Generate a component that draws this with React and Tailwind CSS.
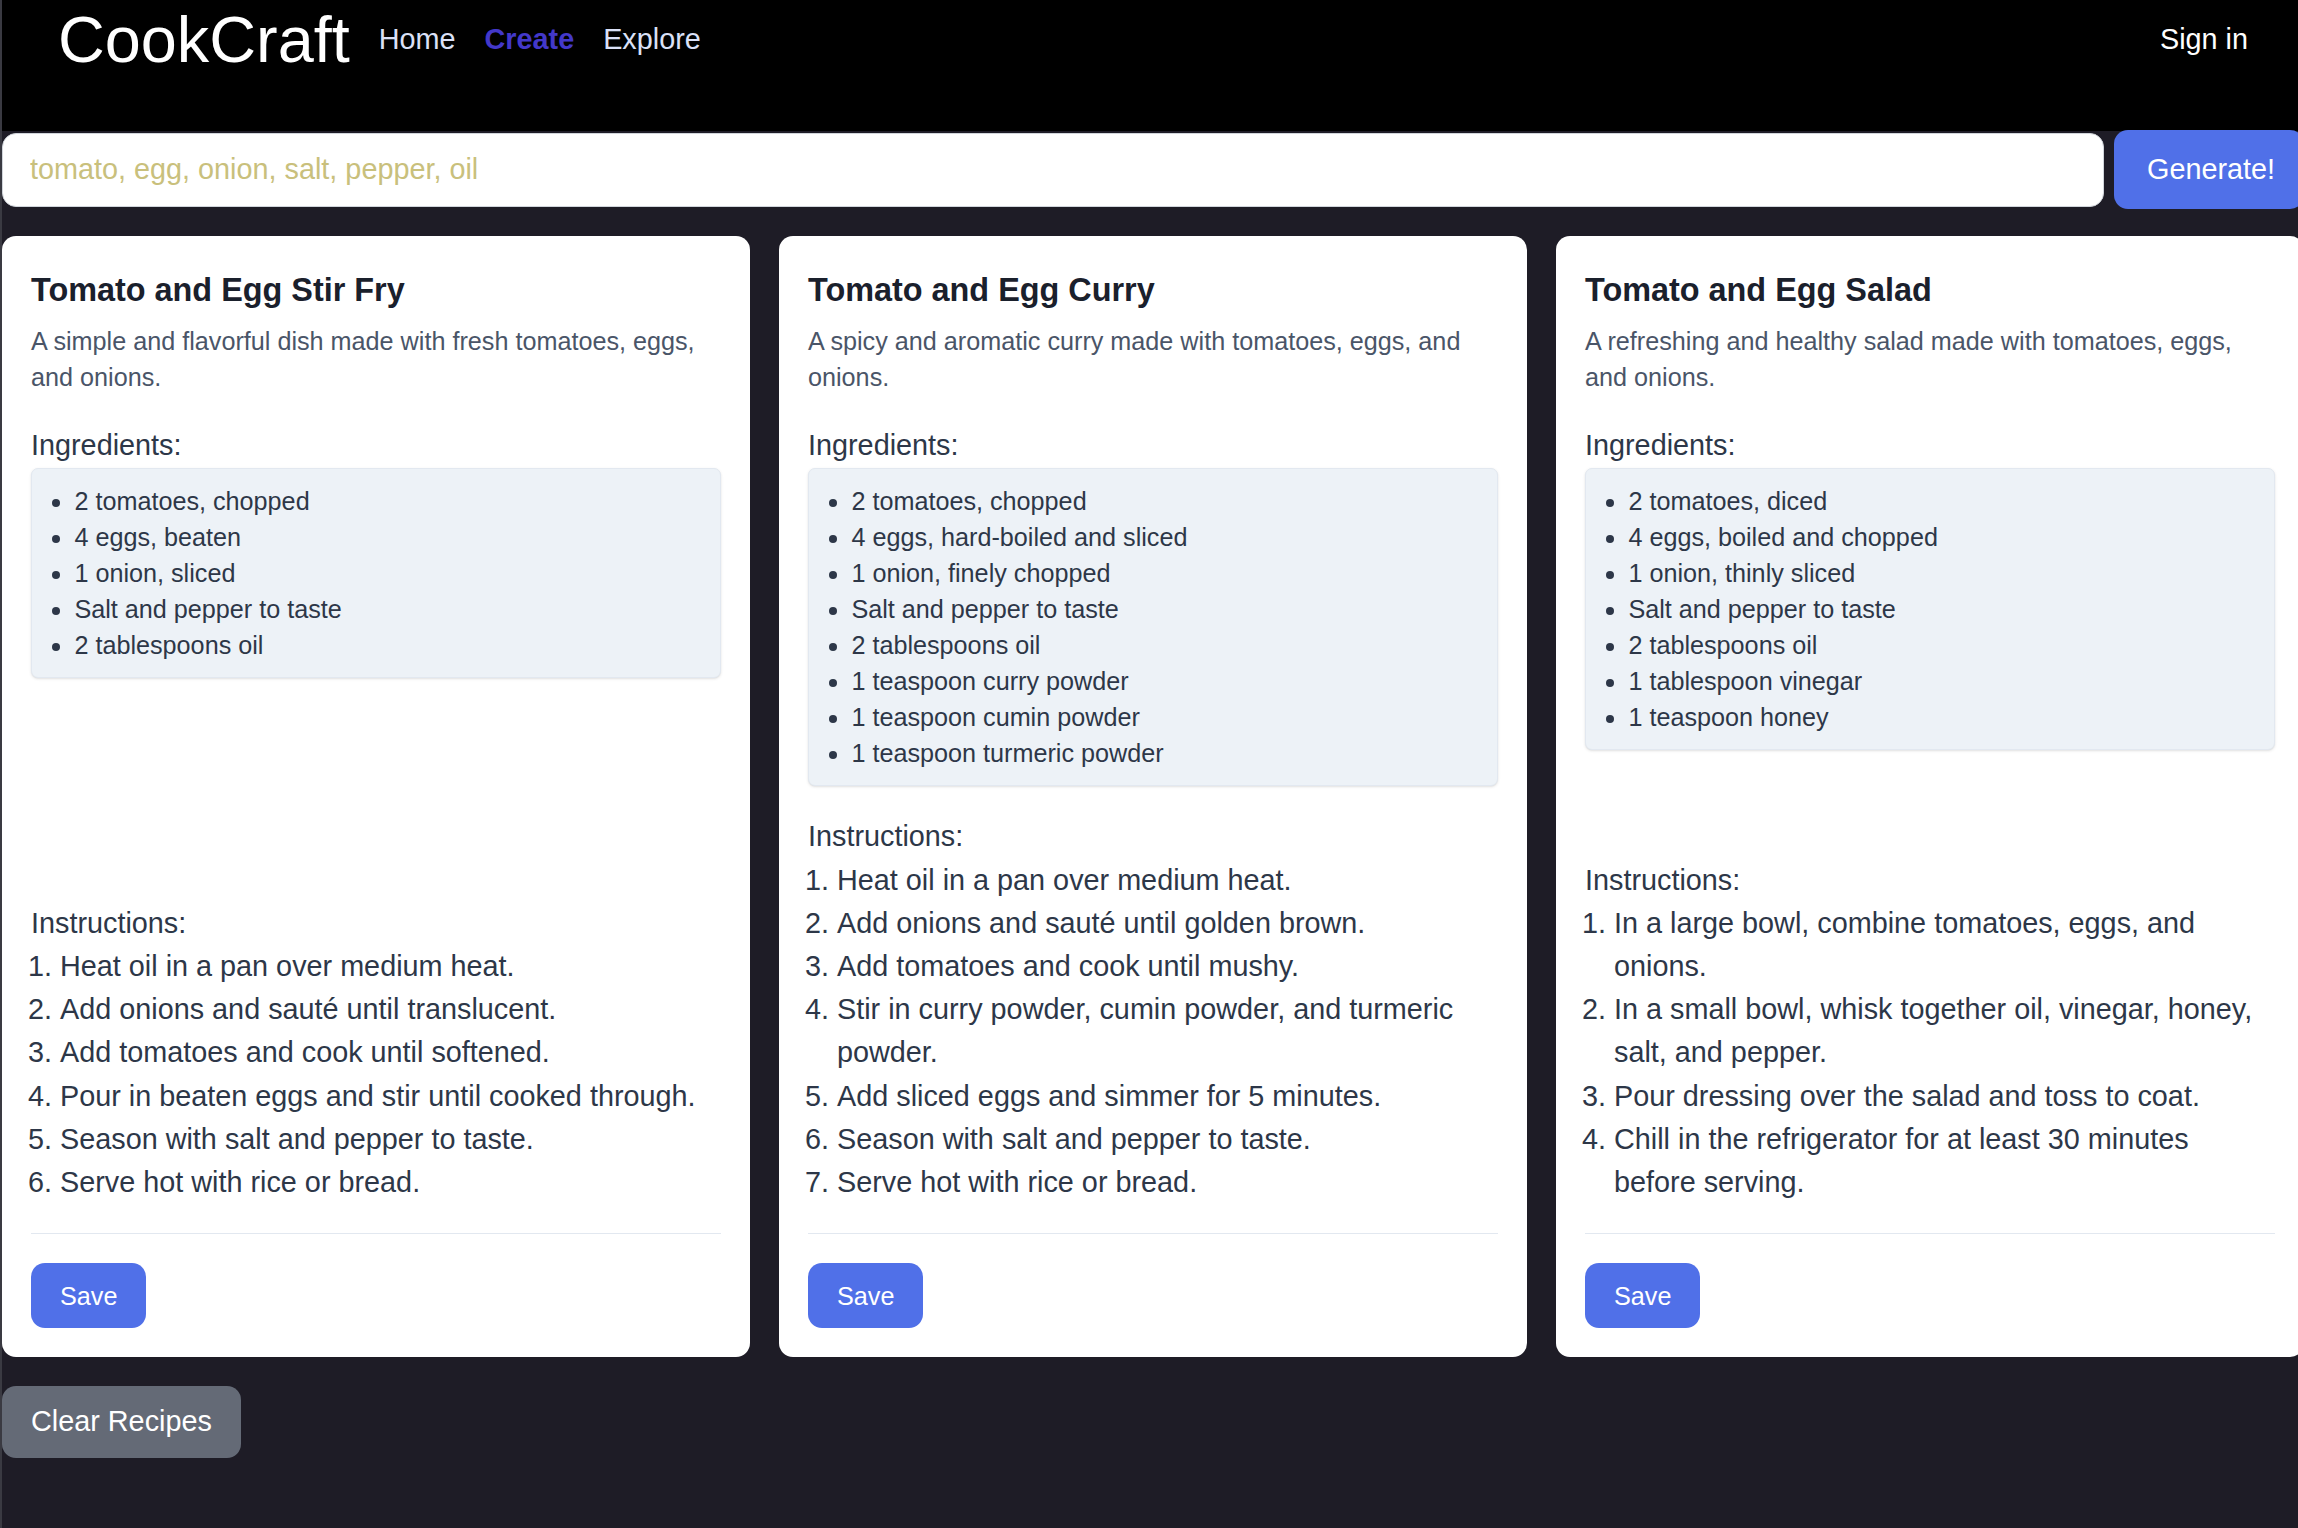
import React from 'react';

const recipes = [
  {
    title: 'Tomato and Egg Stir Fry',
    description: 'A simple and flavorful dish made with fresh tomatoes, eggs, and onions.',
    ingredients: ['2 tomatoes, chopped', '4 eggs, beaten', '1 onion, sliced', 'Salt and pepper to taste', '2 tablespoons oil'],
    instructions: [
      'Heat oil in a pan over medium heat.',
      'Add onions and sauté until translucent.',
      'Add tomatoes and cook until softened.',
      'Pour in beaten eggs and stir until cooked through.',
      'Season with salt and pepper to taste.',
      'Serve hot with rice or bread.',
    ],
  },
  {
    title: 'Tomato and Egg Curry',
    description: 'A spicy and aromatic curry made with tomatoes, eggs, and onions.',
    ingredients: [
      '2 tomatoes, chopped',
      '4 eggs, hard-boiled and sliced',
      '1 onion, finely chopped',
      'Salt and pepper to taste',
      '2 tablespoons oil',
      '1 teaspoon curry powder',
      '1 teaspoon cumin powder',
      '1 teaspoon turmeric powder',
    ],
    instructions: [
      'Heat oil in a pan over medium heat.',
      'Add onions and sauté until golden brown.',
      'Add tomatoes and cook until mushy.',
      'Stir in curry powder, cumin powder, and turmeric powder.',
      'Add sliced eggs and simmer for 5 minutes.',
      'Season with salt and pepper to taste.',
      'Serve hot with rice or bread.',
    ],
  },
  {
    title: 'Tomato and Egg Salad',
    description: 'A refreshing and healthy salad made with tomatoes, eggs, and onions.',
    ingredients: [
      '2 tomatoes, diced',
      '4 eggs, boiled and chopped',
      '1 onion, thinly sliced',
      'Salt and pepper to taste',
      '2 tablespoons oil',
      '1 tablespoon vinegar',
      '1 teaspoon honey',
    ],
    instructions: [
      'In a large bowl, combine tomatoes, eggs, and onions.',
      'In a small bowl, whisk together oil, vinegar, honey, salt, and pepper.',
      'Pour dressing over the salad and toss to coat.',
      'Chill in the refrigerator for at least 30 minutes before serving.',
    ],
  },
];

function RecipeCard({ recipe }) {
  return (
    <div className="bg-white rounded-[14px] p-[29px] flex flex-col">
      <h2 className="text-[32.4px] leading-[50.4px] font-bold text-[#1a202c]">{recipe.title}</h2>
      <p className="mt-[8px] text-[25.2px] leading-[36px] text-[#4a5568]">{recipe.description}</p>

      <h3 className="mt-[29px] text-[28.8px] leading-[43.2px] text-[#2d3748]">Ingredients:</h3>
      <div className="bg-[#edf2f7] border border-[#e2e8f0] rounded-[7px] p-[14.4px] shadow-sm">
        <ul className="list-disc pl-[28px] text-[25.2px] leading-[36px] text-[#2d3748]">
          {recipe.ingredients.map((item, i) => (
            <li key={i}>{item}</li>
          ))}
        </ul>
      </div>

      {/* instructions sit at the bottom so the cards line up */}
      <div className="mt-auto pt-[29px]">
        <h3 className="text-[28.8px] leading-[43.2px] text-[#2d3748]">Instructions:</h3>
        <ol className="list-decimal pl-[29px] text-[28.8px] leading-[43.2px] text-[#2d3748]">
          {recipe.instructions.map((step, i) => (
            <li key={i}>{step}</li>
          ))}
        </ol>
      </div>

      <div className="mt-[29px] pt-[29px] border-t border-[#e2e8f0]">
        <button className="bg-[#5070e8] text-white rounded-[14px] px-[29px] py-[14.4px] text-[25.2px] leading-[36px]">
          Save
        </button>
      </div>
    </div>
  );
}

export default function App() {
  return (
    <div className="min-h-screen w-full overflow-hidden bg-[#1e1c26] border-l-2 border-[#3a3a42] font-['Liberation_Sans',Arial,sans-serif]">
      <div className="w-[2302px] pb-[40px]">
        {/* Header */}
        <header className="bg-black h-[131px] px-[56px]">
          <div className="h-[79px] flex items-center gap-[29px]">
            <span className="text-white text-[64.8px] leading-[72px]">CookCraft</span>
            <nav className="flex items-center gap-[29px] text-[28.8px] leading-[43.2px]">
              <a className="text-[#dbe1f7]">Home</a>
              <a className="text-[#4338ca] font-bold">Create</a>
              <a className="text-[#dbe1f7]">Explore</a>
            </nav>
            <a className="ml-auto text-white text-[28.8px] leading-[43.2px]">Sign in</a>
          </div>
        </header>

        {/* Ingredient form */}
        <div className="-mt-[1px] h-[79px] flex items-center gap-[10px]">
          <input
            className="flex-1 h-[74px] bg-white border border-[#d1d5db] rounded-[14px] px-[27px] text-[28.8px] text-[#2d3748] placeholder:text-[#c9c07c] outline-none"
            placeholder="tomato, egg, onion, salt, pepper, oil"
          />
          <button className="w-[190px] h-[79px] bg-[#5070e8] text-white rounded-[14px] pl-[33px] text-left text-[28.8px] leading-[43.2px]">
            Generate!
          </button>
        </div>

        {/* Recipes */}
        <div className="mt-[27px] grid grid-cols-3 gap-[29px]">
          {recipes.map((r, i) => (
            <RecipeCard key={i} recipe={r} />
          ))}
        </div>

        <button className="mt-[29px] bg-[#646a76] text-white rounded-[14px] px-[29px] py-[14.4px] text-[28.8px] leading-[43.2px]">
          Clear Recipes
        </button>
      </div>
    </div>
  );
}
